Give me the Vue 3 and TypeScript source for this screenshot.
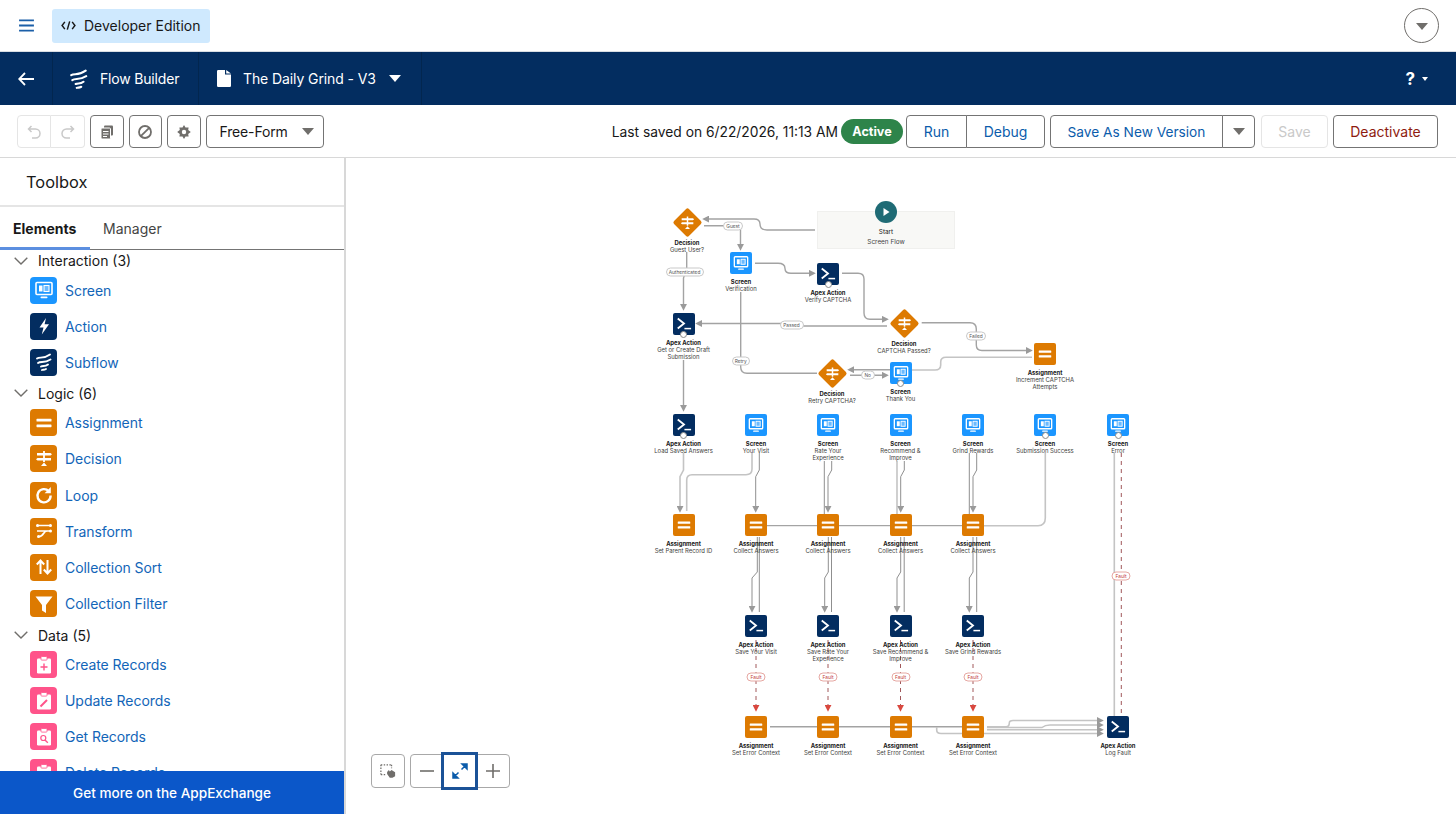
<script setup lang="ts">
type Kind = 'screen' | 'apex' | 'assign' | 'decision'
interface FlowNode { kind: Kind; x: number; y: number; title: string; lines: string[]; handle?: boolean }
interface Edge { d: string; type: 'main' | 'light' | 'thin' | 'fault'; arrow?: boolean }
interface Pill { text: string; x: number; y: number; w: number; fault?: boolean }
interface Section { name: string; items: { label: string; icon: string; tone: string }[] }

const OX = 346
const OY = 158
const place = (x: number, y: number) => ({ left: `${x - OX}px`, top: `${y - OY}px` })

const sections: Section[] = [
  { name: 'Interaction (3)', items: [
    { label: 'Screen', icon: 'i-screen', tone: 'blue' },
    { label: 'Action', icon: 'i-bolt', tone: 'navy' },
    { label: 'Subflow', icon: 'i-flow', tone: 'navy' },
  ] },
  { name: 'Logic (6)', items: [
    { label: 'Assignment', icon: 'i-assign', tone: 'orange' },
    { label: 'Decision', icon: 'i-decision', tone: 'orange' },
    { label: 'Loop', icon: 'i-loop', tone: 'orange' },
    { label: 'Transform', icon: 'i-transform', tone: 'orange' },
    { label: 'Collection Sort', icon: 'i-sort', tone: 'orange' },
    { label: 'Collection Filter', icon: 'i-filter', tone: 'orange' },
  ] },
  { name: 'Data (5)', items: [
    { label: 'Create Records', icon: 'i-create', tone: 'pink' },
    { label: 'Update Records', icon: 'i-update', tone: 'pink' },
    { label: 'Get Records', icon: 'i-get', tone: 'pink' },
    { label: 'Delete Records', icon: 'i-get', tone: 'pink' },
  ] },
]

const nodes: FlowNode[] = [
  { kind: 'decision', x: 687, y: 222, title: 'Decision', lines: ['Guest User?'] },
  { kind: 'screen', x: 741, y: 263, title: 'Screen', lines: ['Verification'] },
  { kind: 'apex', x: 828, y: 274, title: 'Apex Action', lines: ['Verify CAPTCHA'], handle: true },
  { kind: 'decision', x: 904, y: 323, title: 'Decision', lines: ['CAPTCHA Passed?'] },
  { kind: 'apex', x: 683.5, y: 324, title: 'Apex Action', lines: ['Get or Create Draft', 'Submission'], handle: true },
  { kind: 'decision', x: 832, y: 373, title: 'Decision', lines: ['Retry CAPTCHA?'] },
  { kind: 'screen', x: 900.5, y: 373, title: 'Screen', lines: ['Thank You'], handle: true },
  { kind: 'assign', x: 1045, y: 354, title: 'Assignment', lines: ['Increment CAPTCHA', 'Attempts'] },
  { kind: 'apex', x: 683.5, y: 425, title: 'Apex Action', lines: ['Load Saved Answers'], handle: true },
  { kind: 'screen', x: 756, y: 425, title: 'Screen', lines: ['Your Visit'] },
  { kind: 'screen', x: 828, y: 425, title: 'Screen', lines: ['Rate Your', 'Experience'] },
  { kind: 'screen', x: 900.5, y: 425, title: 'Screen', lines: ['Recommend &', 'Improve'] },
  { kind: 'screen', x: 973, y: 425, title: 'Screen', lines: ['Grind Rewards'] },
  { kind: 'screen', x: 1045, y: 425, title: 'Screen', lines: ['Submission Success'], handle: true },
  { kind: 'screen', x: 1118, y: 425, title: 'Screen', lines: ['Error'], handle: true },
  { kind: 'assign', x: 683.5, y: 525, title: 'Assignment', lines: ['Set Parent Record ID'] },
  { kind: 'assign', x: 756, y: 525, title: 'Assignment', lines: ['Collect Answers'] },
  { kind: 'assign', x: 828, y: 525, title: 'Assignment', lines: ['Collect Answers'] },
  { kind: 'assign', x: 900.5, y: 525, title: 'Assignment', lines: ['Collect Answers'] },
  { kind: 'assign', x: 973, y: 525, title: 'Assignment', lines: ['Collect Answers'] },
  { kind: 'apex', x: 756, y: 626, title: 'Apex Action', lines: ['Save Your Visit'] },
  { kind: 'apex', x: 828, y: 626, title: 'Apex Action', lines: ['Save Rate Your', 'Experience'] },
  { kind: 'apex', x: 900.5, y: 626, title: 'Apex Action', lines: ['Save Recommend &', 'Improve'] },
  { kind: 'apex', x: 973, y: 626, title: 'Apex Action', lines: ['Save Grind Rewards'] },
  { kind: 'assign', x: 756, y: 727, title: 'Assignment', lines: ['Set Error Context'] },
  { kind: 'assign', x: 828, y: 727, title: 'Assignment', lines: ['Set Error Context'] },
  { kind: 'assign', x: 900.5, y: 727, title: 'Assignment', lines: ['Set Error Context'] },
  { kind: 'assign', x: 973, y: 727, title: 'Assignment', lines: ['Set Error Context'] },
  { kind: 'apex', x: 1118, y: 727, title: 'Apex Action', lines: ['Log Fault'] },
]

const pills: Pill[] = [
  { text: 'Guest', x: 733, y: 225.5, w: 20 },
  { text: 'Authenticated', x: 684.5, y: 272, w: 38 },
  { text: 'Passed', x: 791.5, y: 324.5, w: 24 },
  { text: 'Retry', x: 740.7, y: 360.5, w: 18 },
  { text: 'No', x: 867.7, y: 375.3, w: 14 },
  { text: 'Failed', x: 976, y: 336, w: 20 },
  { text: 'Fault', x: 1121, y: 575.5, w: 19, fault: true },
  { text: 'Fault', x: 756, y: 676.5, w: 19, fault: true },
  { text: 'Fault', x: 828, y: 676.5, w: 19, fault: true },
  { text: 'Fault', x: 900.5, y: 676.5, w: 19, fault: true },
  { text: 'Fault', x: 973, y: 676.5, w: 19, fault: true },
]

const bend = (a: number, b: number, y1: number, y2: number, y3: number, y4: number) =>
  `M${a} ${y1}V${y2}L${b} ${y3}V${y4}`

const edges: Edge[] = [
  { d: 'M815 230H767Q760 230 760 224Q760 219 754 219H708', type: 'main', arrow: true },
  { d: 'M704 225.7H736Q740.5 225.7 740.5 230V245', type: 'main', arrow: true },
  { d: 'M686.7 252V268L683.5 278V305', type: 'main', arrow: true },
  { d: 'M755 263.3H778Q785 263.3 785 268.5Q785 273.3 791 273.3H810', type: 'main', arrow: true },
  { d: 'M842 273.3H858Q864 273.3 864 279V313Q864 319.3 870 319.3H883', type: 'main', arrow: true },
  { d: 'M887 326H790L785 323.5H701', type: 'main', arrow: true },
  { d: 'M740.7 292V367Q740.7 373.3 747 373.3H817', type: 'main' },
  { d: 'M850 375.3H883', type: 'main', arrow: true },
  { d: 'M890 369.7H853', type: 'main', arrow: true },
  { d: 'M911.7 370H935Q940.7 370 940.7 365V362Q940.7 357.3 946 357.3H1032', type: 'light' },
  { d: 'M921.7 322.7H970Q976.3 322.7 976.3 329V345Q976.3 350.5 982 350.5H1027', type: 'main', arrow: true },
  { d: 'M683.5 360V406', type: 'main', arrow: true },
  { d: bend(683.5, 680, 453, 470, 476.7, 507), type: 'light', arrow: true },
  { d: 'M752 453V469Q752 474.7 746 474.7H692Q686.7 474.7 686.7 480V511', type: 'light' },
  { d: bend(759.3, 755.7, 453, 470, 476.7, 507), type: 'thin', arrow: true },
  { d: 'M824.3 461V514', type: 'thin' },
  { d: bend(831.7, 828, 461, 470, 476.7, 507), type: 'thin', arrow: true },
  { d: 'M897 461V514', type: 'light' },
  { d: bend(904.3, 900.7, 461, 470, 476.7, 507), type: 'thin', arrow: true },
  { d: 'M969.3 453V514', type: 'thin' },
  { d: bend(976.7, 973, 453, 470, 476.7, 507), type: 'thin', arrow: true },
  { d: 'M767 525.7H962', type: 'thin' },
  { d: 'M984 525.7H1038Q1045.3 525.7 1045.3 518V453', type: 'light' },
  { d: 'M1114.3 453V716', type: 'light' },
  { d: bend(757.3, 752, 537, 572, 578, 607), type: 'thin', arrow: true },
  { d: 'M759.3 537V612', type: 'thin' },
  { d: bend(828.3, 824.7, 537, 572, 578, 607), type: 'thin', arrow: true },
  { d: 'M831.5 537V612', type: 'thin' },
  { d: bend(900.7, 897, 537, 572, 578, 607), type: 'thin', arrow: true },
  { d: 'M904.2 537V612', type: 'thin' },
  { d: bend(973, 969.3, 537, 572, 578, 607), type: 'thin', arrow: true },
  { d: 'M976.7 537V612', type: 'thin' },
  { d: 'M770 726.7H962', type: 'main' },
  { d: 'M936.7 727V730Q936.7 733.5 941 733.5H1098', type: 'light', arrow: true },
  { d: 'M987 726.7H1006Q1009.3 726.7 1009.3 723Q1009.3 720.5 1013 720.5H1098', type: 'light', arrow: true },
  { d: 'M987 727.5H1042Q1045 725 1050 725H1098', type: 'light', arrow: true },
  { d: 'M987 729.7H1098', type: 'light', arrow: true },
]

const faultEdges: string[] = [
  'M1121.3 453V714',
  'M756 640V706',
  'M828 640V706',
  'M900.5 640V706',
  'M973 640V706',
]
</script>

<template>
  <div class="page">
    <svg class="defs" aria-hidden="true">
      <defs>
        <marker id="arr" viewBox="0 0 6 6" refX="1" refY="3" markerWidth="7" markerHeight="7" markerUnits="userSpaceOnUse" orient="auto">
          <path d="M0 0L6 3L0 6Z" fill="#9a9a9a" />
        </marker>
        <marker id="arrFault" viewBox="0 0 6 6" refX="1" refY="3" markerWidth="7" markerHeight="7" markerUnits="userSpaceOnUse" orient="auto">
          <path d="M0 0L6 3L0 6Z" fill="#d9483f" />
        </marker>
        <symbol id="i-screen" viewBox="0 0 24 24">
          <rect x="4" y="4.5" width="16" height="12" rx="1" fill="none" stroke="#fff" stroke-width="1.6" />
          <rect x="7" y="7.5" width="3.5" height="6" fill="#fff" />
          <rect x="12" y="7.5" width="5" height="6" fill="#fff" fill-opacity=".35" stroke="#fff" stroke-width="1.1" />
          <rect x="8.5" y="18.6" width="7" height="1.6" rx=".8" fill="#fff" />
        </symbol>
        <symbol id="i-bolt" viewBox="0 0 24 24">
          <path d="M14 4L7.5 13.5H11.5L9.8 20.5L17 10.3H12.6Z" fill="#fff" />
        </symbol>
        <symbol id="i-flow" viewBox="0 0 24 24">
          <path d="M5 8.5C8 6.5 11 9.5 18 4.5M6 13C9 11 12 13.5 18.5 9.5M9 16.5C11 15.3 13 17 16 14.5M10 20C11 19.5 12 20.2 14 19" fill="none" stroke="#fff" stroke-width="1.9" stroke-linecap="round" />
        </symbol>
        <symbol id="i-assign" viewBox="0 0 24 24">
          <rect x="4.5" y="7.8" width="15" height="2.8" rx=".6" fill="#fff" />
          <rect x="4.5" y="13.4" width="15" height="2.8" rx=".6" fill="#fff" />
        </symbol>
        <symbol id="i-decision" viewBox="0 0 24 24">
          <path d="M5 6H18.5L20 7.2L18.5 8.4H5ZM19 11H5.5L4 12.2L5.5 13.4H19Z" fill="#fff" />
          <rect x="11.1" y="4" width="1.8" height="11" fill="#fff" />
          <path d="M12 15.6L15 19H9Z" fill="#fff" />
        </symbol>
        <symbol id="i-loop" viewBox="0 0 24 24">
          <path d="M16.8 8.2A6.6 6.6 0 1 0 18.6 12.5" fill="none" stroke="#fff" stroke-width="2.4" />
          <path d="M18.8 4V10.2H12.6Z" fill="#fff" />
        </symbol>
        <symbol id="i-transform" viewBox="0 0 24 24">
          <path d="M5 6.5H19M5 12H19M15 12C11 12 12 17.5 7 17.5" fill="none" stroke="#fff" stroke-width="1.7" />
          <circle cx="5.5" cy="6.5" r="1.5" fill="#fff" /><circle cx="18.5" cy="6.5" r="1.5" fill="#fff" />
          <circle cx="18.5" cy="12" r="1.5" fill="#fff" /><circle cx="6.5" cy="17.5" r="1.5" fill="#fff" />
        </symbol>
        <symbol id="i-sort" viewBox="0 0 24 24">
          <path d="M8.5 19V6M4.8 9.5L8.5 5.5L12.2 9.5M15.5 5V18M11.8 14.5L15.5 18.5L19.2 14.5" fill="none" stroke="#fff" stroke-width="2" />
        </symbol>
        <symbol id="i-filter" viewBox="0 0 24 24">
          <path d="M3.5 4.5H20.5L14 13V21L10 18.5V13Z" fill="#fff" />
        </symbol>
        <symbol id="i-create" viewBox="0 0 24 24">
          <rect x="5" y="5.5" width="14" height="15" rx="1.2" fill="#fff" />
          <rect x="9" y="3.5" width="6" height="3.6" rx=".7" fill="#fff" stroke="#ff538a" stroke-width=".8" />
          <path d="M12 10.5V17.5M8.5 14H15.5" stroke="#ff538a" stroke-width="1.4" />
        </symbol>
        <symbol id="i-update" viewBox="0 0 24 24">
          <rect x="5" y="5.5" width="14" height="15" rx="1.2" fill="#fff" />
          <rect x="9" y="3.5" width="6" height="3.6" rx=".7" fill="#fff" stroke="#ff538a" stroke-width=".8" />
          <path d="M8.5 17.5L15 11" stroke="#ff538a" stroke-width="2" />
        </symbol>
        <symbol id="i-get" viewBox="0 0 24 24">
          <rect x="5" y="5.5" width="14" height="15" rx="1.2" fill="#fff" />
          <rect x="9" y="3.5" width="6" height="3.6" rx=".7" fill="#fff" stroke="#ff538a" stroke-width=".8" />
          <circle cx="11.3" cy="13" r="2.5" fill="none" stroke="#ff538a" stroke-width="1.2" />
          <path d="M13 15L15.8 17.8" stroke="#ff538a" stroke-width="1.4" />
        </symbol>
        <symbol id="i-apex" viewBox="0 0 24 24">
          <path d="M4.5 5.5L12 11.5L4.5 17.5" fill="none" stroke="#fff" stroke-width="2.2" />
          <rect x="12.5" y="16.6" width="8" height="1.8" fill="#fff" />
        </symbol>
      </defs>
    </svg>

    <header class="topbar">
      <svg class="burger" viewBox="0 0 16 14"><path d="M0 1.5H16M0 7H16M0 12.5H16" stroke="#1b5fa8" stroke-width="1.9" /></svg>
      <div class="edition">
        <svg class="code" viewBox="0 0 16 12"><path d="M4 2L1 6L4 10M12 2L15 6L12 10M9.3 1.5L6.7 10.5" fill="none" stroke="#181818" stroke-width="1.6" /></svg>
        <span>Developer Edition</span>
      </div>
      <div class="grow"></div>
      <button class="avatar"><span class="tri tri-gray"></span></button>
    </header>

    <nav class="navbar">
      <div class="nav-cell back">
        <svg viewBox="0 0 16 14" class="back-ic"><path d="M7 1L1.2 7L7 13M1.5 7H16" fill="none" stroke="#fff" stroke-width="1.8" /></svg>
      </div>
      <div class="nav-cell fb">
        <svg viewBox="4 3 16 18" class="flow-ic"><use href="#i-flow" x="0" y="0" width="24" height="24" /></svg>
        <span class="fb-name">Flow Builder</span>
      </div>
      <div class="nav-cell doc">
        <svg viewBox="0 0 14 17" class="doc-ic"><path d="M1.2 0H8V4.6H14V15.8Q14 17 12.8 17H1.2Q0 17 0 15.8V1.2Q0 0 1.2 0ZM9.2 0L14 3.5H9.2Z" fill="#fff" /></svg>
        <span class="doc-name">The Daily Grind - V3</span>
        <span class="tri tri-white"></span>
      </div>
      <div class="grow"></div>
      <div class="help"><b>?</b><span class="tri tri-small"></span></div>
    </nav>

    <div class="toolbar">
      <div class="btn-group">
        <button class="ic-btn dis">
          <svg viewBox="0 0 16 16"><path d="M5.5 2L2.5 5L5.5 8M3 5H9.5A4 4 0 0 1 9.5 14H6" fill="none" stroke="#c9c9c9" stroke-width="1.5" /></svg>
        </button>
        <button class="ic-btn dis">
          <svg viewBox="0 0 16 16"><path d="M10.5 2L13.5 5L10.5 8M13 5H6.5A4 4 0 0 0 6.5 14H10" fill="none" stroke="#c9c9c9" stroke-width="1.5" /></svg>
        </button>
      </div>
      <button class="ic-btn solo">
        <svg viewBox="0 0 16 16"><rect x="5" y="1.5" width="9" height="10" rx="1" fill="#706e6b" /><rect x="2" y="4" width="9.5" height="11" rx="1" fill="#706e6b" stroke="#fff" stroke-width="1" /><path d="M4 7.5H9.5M4 10H9.5M4 12.5H8" stroke="#fff" stroke-width="1" /></svg>
      </button>
      <button class="ic-btn solo">
        <svg viewBox="0 0 16 16"><circle cx="8" cy="8" r="6" fill="none" stroke="#706e6b" stroke-width="1.8" /><path d="M3.8 12.2L12.2 3.8" stroke="#706e6b" stroke-width="1.8" /></svg>
      </button>
      <button class="ic-btn solo">
        <svg viewBox="0 0 16 16"><path d="M8 1L9.5 3.4H12.6L12.2 6L14.8 8L12.2 10L12.6 12.6H9.5L8 15L6.5 12.6H3.4L3.8 10L1.2 8L3.8 6L3.4 3.4H6.5Z" fill="#706e6b" /><circle cx="8" cy="8" r="2.2" fill="#fff" /></svg>
      </button>
      <button class="select"><span class="sel-text">Free-Form</span><span class="tri tri-gray"></span></button>
      <div class="grow"></div>
      <span class="saved">Last saved on 6/22/2026, 11:13 AM</span>
      <span class="status">Active</span>
      <div class="btn-group ml3">
        <button class="txt run">Run</button>
        <button class="txt debug">Debug</button>
      </div>
      <div class="btn-group gap6">
        <button class="txt saveas">Save As New Version</button>
        <button class="txt caret"><span class="tri tri-gray"></span></button>
      </div>
      <button class="txt save" disabled>Save</button>
      <button class="txt deact">Deactivate</button>
    </div>

    <div class="body">
      <aside class="sidebar">
        <div class="tb-title">Toolbox</div>
        <div class="tabs">
          <div class="tab active">Elements</div>
          <div class="tab">Manager</div>
        </div>
        <div class="palette">
          <section v-for="s in sections" :key="s.name" class="sec">
            <div class="sec-head">
              <svg viewBox="0 0 14 8" class="chev"><path d="M.7 .7L7 7L13.3 .7" fill="none" stroke="#706e6b" stroke-width="1.4" /></svg>
              <span>{{ s.name }}</span>
            </div>
            <div v-for="it in s.items" :key="it.label" class="row">
              <span class="tile" :class="it.tone"><svg viewBox="0 0 24 24"><use :href="'#' + it.icon" width="24" height="24" /></svg></span>
              <span class="link">{{ it.label }}</span>
            </div>
          </section>
        </div>
        <div class="appex">Get more on the AppExchange</div>
      </aside>

      <main class="canvas">
        <svg class="edges" viewBox="346 158 1110 656" width="1110" height="656">
          <path v-for="(e, i) in edges" :key="i" :d="e.d" :class="e.type" :marker-end="e.arrow ? 'url(#arr)' : undefined" />
          <path v-for="(f, i) in faultEdges" :key="'f' + i" :d="f" class="fault" :marker-end="i > 0 ? 'url(#arrFault)' : undefined" />
        </svg>

        <div class="start" :style="place(817, 211)">
          <span class="start-dot"><svg viewBox="0 0 10 10"><path d="M2.5 1L8.5 5L2.5 9Z" fill="#fff" /></svg></span>
          <span class="start-t">Start</span>
          <span class="start-s">Screen Flow</span>
        </div>

        <div v-for="n in nodes" :key="n.x + '-' + n.y" class="node" :class="n.kind" :style="place(n.x, n.y)">
          <div class="shape">
            <svg viewBox="0 0 24 24" class="glyph">
              <use :href="n.kind === 'screen' ? '#i-screen' : n.kind === 'apex' ? '#i-apex' : n.kind === 'assign' ? '#i-assign' : '#i-decision'" width="24" height="24" />
            </svg>
            <span v-if="n.handle" class="handle"></span>
          </div>
          <div class="cap">
            <b>{{ n.title }}</b>
            <span v-for="l in n.lines" :key="l">{{ l }}</span>
          </div>
        </div>

        <span v-for="(p, i) in pills" :key="i" class="pill" :class="{ bad: p.fault }" :style="{ ...place(p.x, p.y), width: p.w + 'px' }">{{ p.text }}</span>

        <div class="controls">
          <button class="c-btn">
            <svg viewBox="0 0 18 16"><path d="M1 1H13M1 1V12M13 1V5M1 12H6" fill="none" stroke="#706e6b" stroke-width="1.4" stroke-dasharray="1.6 1.6" /><path d="M8 9L10 7L11 8.5L13 7L17 9.5V14L14 15.5H11L8 11.5Z" fill="#706e6b" /></svg>
          </button>
          <div class="c-group">
            <button class="c-btn">
              <svg viewBox="0 0 16 16"><path d="M1 8H15" stroke="#706e6b" stroke-width="1.6" /></svg>
            </button>
            <button class="c-btn focus">
              <svg viewBox="0 0 16 16"><path d="M10 1H15V6ZM1 10V15H6ZM13 3L9.5 6.5M6.5 9.5L3 13" fill="#0b5cab" stroke="#0b5cab" stroke-width="1.5" /></svg>
            </button>
            <button class="c-btn">
              <svg viewBox="0 0 16 16"><path d="M1 8H15M8 1V15" stroke="#706e6b" stroke-width="1.6" /></svg>
            </button>
          </div>
        </div>
      </main>
    </div>
  </div>
</template>

<style scoped>
.page { width: 1456px; height: 814px; overflow: hidden; display: flex; flex-direction: column; font-family: Inter, "Liberation Sans", sans-serif; font-size: 14px; color: #181818; background: #fff; }
.defs { position: absolute; width: 0; height: 0; }
.grow { flex: 1; }
button { font-family: inherit; font-size: 14px; background: #fff; cursor: pointer; padding: 0; }

.tri { display: inline-block; width: 0; height: 0; border-left: 6px solid transparent; border-right: 6px solid transparent; border-top: 7px solid #706e6b; }
.tri-white { border-top-color: #fff; }
.tri-small { border-left-width: 3px; border-right-width: 3px; border-top: 4px solid #fff; }

.topbar { height: 51px; border-bottom: 1px solid #d9dde3; display: flex; align-items: center; padding: 0 17px 0 19px; flex: none; }
.burger { width: 15px; height: 13px; margin-right: 18px; }
.edition { height: 34px; width: 158px; box-sizing: border-box; background: #cfe9fe; border-radius: 3px; display: flex; align-items: center; padding-left: 9px; gap: 8px; font-size: 14px; }
.code { width: 15px; height: 11px; }
.avatar { width: 35px; height: 35px; border-radius: 50%; border: 1px solid #706e6b; display: flex; align-items: center; justify-content: center; }
.avatar .tri { margin-top: 2px; }

.navbar { height: 53px; background: #032d60; color: #fff; display: flex; align-items: stretch; flex: none; }
.nav-cell { display: flex; align-items: center; border-right: 1px solid #02264f; box-sizing: border-box; }
.back { width: 53px; justify-content: center; }
.back-ic { width: 16px; height: 14px; }
.fb { width: 146px; padding-left: 17px; gap: 12px; }
.fb-name { letter-spacing: -0.18px; }
.flow-ic { width: 18px; height: 20px; }
.doc { width: 223px; padding-left: 18px; }
.doc-ic { width: 14px; height: 17px; margin-right: 12px; }
.doc-name { letter-spacing: -0.1px; }
.doc .tri { margin-left: 13px; }
.help { display: flex; align-items: center; gap: 7px; padding-right: 28px; font-size: 17px; }
.help b { font-weight: 700; }

.toolbar { height: 51px; padding: 1px 18px 0 17px; border-bottom: 1px solid #d8d8d8; display: flex; align-items: center; flex: none; box-sizing: content-box; }
.btn-group { display: flex; margin-right: 5px; }
.ml3 { margin-left: 3px; }
.gap6 { margin-right: 6px; }
.ic-btn { width: 33.5px; height: 33px; display: flex; align-items: center; justify-content: center; border: 1px solid #747474; border-radius: 4px; flex: none; }
.ic-btn svg { width: 16px; height: 16px; }
.ic-btn.dis { border-color: #e5e5e5; width: 34px; }
.ic-btn.dis:first-child { border-radius: 4px 0 0 4px; }
.ic-btn.dis:last-child { border-radius: 0 4px 4px 0; border-left: 0; }
.solo { margin-right: 5px; }
.select { width: 118px; height: 33px; border: 1px solid #747474; border-radius: 4px; display: flex; align-items: center; justify-content: space-between; padding: 0 9px 0 13px; color: #181818; }
.sel-text { letter-spacing: -0.15px; }
.saved { font-size: 13.8px; margin-right: 3px; white-space: nowrap; }
.status { width: 62px; height: 25px; border-radius: 13px; background: #2e844a; color: #fff; font-weight: 700; font-size: 12.6px; display: flex; align-items: center; justify-content: center; }
.txt { height: 33px; border: 1px solid #747474; border-radius: 4px; color: #0b5cab; font-size: 14px; white-space: nowrap; }
.run { width: 61px; border-radius: 4px 0 0 4px; }
.debug { width: 79px; border-radius: 0 4px 4px 0; border-left: 1px solid #747474; margin-left: -1px; }
.saveas { width: 173px; border-radius: 4px 0 0 4px; font-size: 13.7px; }
.caret { width: 33px; border-radius: 0 4px 4px 0; margin-left: -1px; display: flex; align-items: center; justify-content: center; }
.save { width: 67px; color: #c9c9c9; border-color: #e5e5e5; margin-right: 5px; }
.deact { width: 105px; color: #8e1b10; }

.body { flex: 1; display: flex; min-height: 0; }
.sidebar { width: 346px; flex: none; box-sizing: border-box; border-right: 2px solid #d8d8d8; display: flex; flex-direction: column; min-height: 0; }
.tb-title { height: 49px; box-sizing: border-box; border-bottom: 2px solid #e5e5e5; padding-left: 26px; display: flex; align-items: center; font-size: 16.4px; flex: none; }
.tabs { height: 43px; box-sizing: border-box; display: flex; border-bottom: 1px solid #747474; flex: none; }
.tab { padding: 0 13px; line-height: 44px; color: #444; }
.tab.active { width: 90px; box-sizing: border-box; color: #181818; font-weight: 700; border-bottom: 3px solid #5c8fe0; height: 43px; }
.palette { flex: 1; overflow: hidden; min-height: 0; margin-top: -2px; }
.sec:last-child { margin-top: 1px; }
.sec:last-child .row { height: 36px; }
.sec-head { height: 24px; box-sizing: border-box; padding: 1px 0 0 14px; display: flex; align-items: center; gap: 10px; }
.chev { width: 14px; height: 8px; }
.row { height: 36.2px; display: flex; align-items: center; padding-left: 30px; gap: 8px; }
.tile { width: 27px; height: 27px; border-radius: 4px; display: flex; align-items: center; justify-content: center; flex: none; }
.tile svg { width: 24px; height: 24px; }
.blue { background: #1b96ff; }
.navy { background: #032d60; }
.orange { background: #dd7a01; }
.pink { background: #ff538a; }
.link { color: #1265b8; letter-spacing: -0.05px; }
.appex { height: 43px; flex: none; background: #0b57c9; color: #fff; display: flex; align-items: center; padding-left: 73px; font-size: 13.6px; font-weight: 500; }

.canvas { flex: 1; position: relative; overflow: hidden; }
.edges { position: absolute; left: 0; top: 0; }
.edges path { fill: none; }
.main { stroke: #a3a3a3; stroke-width: 1.4; }
.light { stroke: #c4c4c4; stroke-width: 1.6; }
.thin { stroke: #8f8f8f; stroke-width: 1; }
.fault { stroke: #a1585a; stroke-width: 1; stroke-dasharray: 4 4; }

.start { position: absolute; width: 138px; height: 38px; background: #f8f8f6; border: 1px solid #f0f0ee; box-sizing: border-box; display: flex; flex-direction: column; align-items: center; font-size: 6.4px; }
.start-dot { position: absolute; top: -11px; left: 57px; width: 22px; height: 22px; border-radius: 50%; background: #1f6b75; display: flex; align-items: center; justify-content: center; }
.start-dot svg { width: 10px; height: 10px; }
.start-t { margin-top: 16px; line-height: 8px; }
.start-s { margin-top: 2px; line-height: 8px; color: #444; }

.node { position: absolute; width: 0; height: 0; display: flex; flex-direction: column; align-items: center; }
.shape { position: absolute; width: 22px; height: 22px; left: -11px; top: -11px; border-radius: 2px; display: flex; align-items: center; justify-content: center; }
.glyph { width: 20px; height: 20px; }
.screen .shape { background: #1b96ff; }
.apex .shape { background: #032d60; }
.assign .shape { background: #dd7a01; }
.decision .shape { width: 21px; height: 21px; left: -10.5px; top: -10.5px; background: #dd7a01; transform: rotate(45deg); }
.decision .glyph { transform: rotate(-45deg); }
.handle { position: absolute; left: 7.5px; bottom: -3px; width: 7px; height: 7px; box-sizing: border-box; border-radius: 50%; background: #fff; border: 1px solid #8a8a8a; }
.cap { position: absolute; top: 14.5px; left: -50px; width: 100px; display: flex; flex-direction: column; align-items: center; font-size: 5.9px; line-height: 7px; color: #3e3e3c; white-space: nowrap; }
.decision .cap { top: 16.5px; }
.cap b { color: #181818; font-weight: 700; }

.pill { position: absolute; height: 9px; box-sizing: border-box; transform: translate(-50%, -50%); background: #fff; border: 1px solid #c9c9c9; border-radius: 5px; font-size: 4.8px; line-height: 7px; text-align: center; color: #555; }
.pill.bad { border-color: #e6a8a3; color: #c23934; }

.controls { position: absolute; left: 25px; top: 596px; display: flex; gap: 5px; }
.c-btn { width: 34px; height: 34px; display: flex; align-items: center; justify-content: center; border: 1px solid #a8a8a8; border-radius: 4px; position: relative; }
.c-btn svg { width: 16px; height: 16px; }
.c-group { display: flex; }
.c-group .c-btn { border-radius: 0; margin-left: -1px; }
.c-group .c-btn:first-child { border-radius: 4px 0 0 4px; margin-left: 0; }
.c-group .c-btn:last-child { border-radius: 0 4px 4px 0; }
.c-btn.focus { border: 3px solid #1b5297; border-radius: 0; z-index: 1; width: 37px; height: 38px; margin: -2px -1px 0 -3px; }
</style>
